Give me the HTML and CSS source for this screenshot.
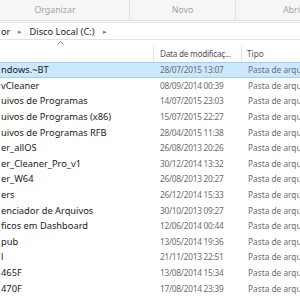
FILE: index.html
```html
<!DOCTYPE html>
<html lang="pt-BR">
<head>
  <meta charset="UTF-8">
  <title>Disco Local (C:)</title>
  <link rel="stylesheet" href="styles.css">
</head>
<body>
  <!-- Ribbon group labels -->
  <div class="ribbon">
    <div class="group group-org">Organizar</div>
    <div class="group group-new">Novo</div>
    <div class="group group-open">Abrir</div>
  </div>

  <!-- Address bar -->
  <div class="address">
    <span class="crumb">or</span>
    <span class="chev">&#9656;</span>
    <span class="crumb">Disco Local (C:)</span>
    <span class="chev">&#9656;</span>
  </div>

  <!-- File list -->
  <div class="list">
    <svg class="sort-mark" width="7" height="4" viewBox="0 0 7 4">
      <path d="M0.5 3.5 L3.5 0.5 L6.5 3.5" fill="none" stroke="#6f8db3" stroke-width="1"/>
    </svg>
    <div class="row head">
      <div class="col name"></div>
      <div class="col date">Data de modificaç...</div>
      <div class="col type">Tipo</div>
    </div>
    <div class="row selected">
      <div class="col name">ndows.~BT</div>
      <div class="col date">28/07/2015 13:07</div>
      <div class="col type">Pasta de arquivos</div>
    </div>
    <div class="row">
      <div class="col name">vCleaner</div>
      <div class="col date">08/09/2014 00:39</div>
      <div class="col type">Pasta de arquivos</div>
    </div>
    <div class="row">
      <div class="col name">uivos de Programas</div>
      <div class="col date">14/07/2015 23:03</div>
      <div class="col type">Pasta de arquivos</div>
    </div>
    <div class="row">
      <div class="col name">uivos de Programas (x86)</div>
      <div class="col date">15/07/2015 22:27</div>
      <div class="col type">Pasta de arquivos</div>
    </div>
    <div class="row">
      <div class="col name">uivos de Programas RFB</div>
      <div class="col date">28/04/2015 11:38</div>
      <div class="col type">Pasta de arquivos</div>
    </div>
    <div class="row">
      <div class="col name">er_allOS</div>
      <div class="col date">26/08/2013 20:26</div>
      <div class="col type">Pasta de arquivos</div>
    </div>
    <div class="row">
      <div class="col name">er_Cleaner_Pro_v1</div>
      <div class="col date">30/12/2014 13:32</div>
      <div class="col type">Pasta de arquivos</div>
    </div>
    <div class="row">
      <div class="col name">er_W64</div>
      <div class="col date">26/08/2013 20:27</div>
      <div class="col type">Pasta de arquivos</div>
    </div>
    <div class="row">
      <div class="col name">ers</div>
      <div class="col date">26/12/2014 15:33</div>
      <div class="col type">Pasta de arquivos</div>
    </div>
    <div class="row">
      <div class="col name">enciador de Arquivos</div>
      <div class="col date">30/10/2013 09:27</div>
      <div class="col type">Pasta de arquivos</div>
    </div>
    <div class="row">
      <div class="col name">ficos em Dashboard</div>
      <div class="col date">12/06/2014 00:44</div>
      <div class="col type">Pasta de arquivos</div>
    </div>
    <div class="row">
      <div class="col name">pub</div>
      <div class="col date">13/05/2014 19:36</div>
      <div class="col type">Pasta de arquivos</div>
    </div>
    <div class="row">
      <div class="col name">l</div>
      <div class="col date">21/11/2013 22:51</div>
      <div class="col type">Pasta de arquivos</div>
    </div>
    <div class="row">
      <div class="col name">465F</div>
      <div class="col date">13/08/2014 15:34</div>
      <div class="col type">Pasta de arquivos</div>
    </div>
    <div class="row">
      <div class="col name">470F</div>
      <div class="col date">17/08/2014 23:39</div>
      <div class="col type">Pasta de arquivos</div>
    </div>
  </div>
</body>
</html>
```

FILE: styles.css
```css
html, body {
  margin: 0;
  height: 300px;
  overflow: hidden;
}
body {
  font-family: "Noto Sans", "Open Sans", sans-serif;
  font-size: 9px;
  background-color: #ffffff;
  color: #1e1e1e;
}

/* Ribbon */
.ribbon {
  display: flex;
  height: 21px;
  background-color: #f5f6f7;
  border-bottom: 1px solid #dadbdc;
  box-sizing: border-box;
  white-space: nowrap;
}
.group {
  flex: none;
  display: flex;
  align-items: flex-end;
  justify-content: center;
  box-sizing: border-box;
  padding-bottom: 4px;
  color: #a3a3a3;
  font-size: 8.8px;
  border-right: 1px solid #e2e3e4;
}
.group-org {
  width: 130px;
  padding-right: 19px;
}
.group-new {
  width: 106px;
}
.group-open {
  width: 80px;
  justify-content: flex-start;
  padding-left: 47px;
  border-right: none;
}

/* Address bar */
.address {
  display: flex;
  align-items: center;
  height: 18px;
  margin-top: 1px;
  border-top: 1px solid #e3e3e3;
  border-bottom: 1px solid #e3e3e3;
  box-sizing: border-box;
  color: #1e1e1e;
  font-size: 9.3px;
  white-space: nowrap;
}
.crumb {
  padding-left: 1px;
}
.chev {
  color: #7a7a7a;
  font-size: 7px;
  padding: 0 6px 0 8px;
}

/* File list */
.list {
  position: relative;
  padding-top: 6px;
}
.sort-mark {
  position: absolute;
  left: 57px;
  top: 1px;
}
.row {
  display: flex;
  height: 15.6px;
  align-items: center;
  white-space: nowrap;
  box-sizing: border-box;
  border-top: 1px solid transparent;
  border-bottom: 1px solid transparent;
}
.row.selected {
  background-color: #cce8ff;
  border-color: #99d1ff;
}
.col {
  flex: none;
  overflow: hidden;
  box-sizing: border-box;
}
.name {
  width: 154px;
  padding-left: 1px;
  font-size: 9.3px;
  color: #1a1a1a;
}
.date {
  width: 88px;
  padding-left: 6px;
  font-size: 8.3px;
  letter-spacing: -0.25px;
  color: #6d6d6d;
}
.type {
  width: 80px;
  padding-left: 6px;
  font-size: 8.3px;
  color: #6d6d6d;
}
.head {
  height: 16px;
}
.head .col {
  color: #4c5460;
  height: 16px;
  line-height: 16px;
  font-size: 8.2px;
}
.head .name,
.head .date {
  border-right: 1px solid #e5e5e5;
}
.head .type {
  padding-left: 5px;
}
```
